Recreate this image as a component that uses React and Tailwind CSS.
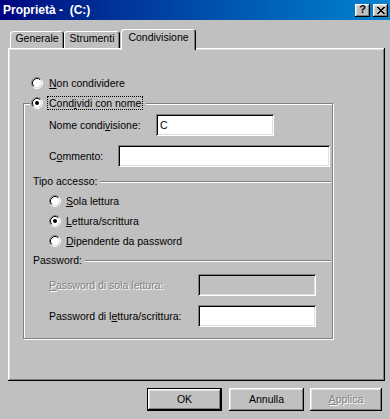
import React from "react";

const raised =
  "shadow-[inset_-1px_-1px_0_#000,inset_1px_1px_0_#fff,inset_-2px_-2px_0_#808080,inset_2px_2px_0_#dfdfdf]";
const sunken =
  "shadow-[inset_1px_1px_0_#808080,inset_-1px_-1px_0_#fff,inset_2px_2px_0_#000,inset_-2px_-2px_0_#dfdfdf]";

function Radio({ checked }) {
  return (
    <svg width="12" height="12" viewBox="0 0 12 12" className="shrink-0 block">
      <circle cx="6" cy="6" r="4.5" fill="#fff" />
      <path d="M2.11 9.89 A5.5 5.5 0 0 1 9.89 2.11" fill="none" stroke="#808080" strokeWidth="1" />
      <path d="M9.89 2.11 A5.5 5.5 0 0 1 2.11 9.89" fill="none" stroke="#fff" strokeWidth="1" />
      <path d="M2.82 9.18 A4.5 4.5 0 0 1 9.18 2.82" fill="none" stroke="#000" strokeWidth="1" />
      <path d="M9.18 2.82 A4.5 4.5 0 0 1 2.82 9.18" fill="none" stroke="#dfdfdf" strokeWidth="1" />
      {checked && <circle cx="6" cy="6" r="2" fill="#000" />}
    </svg>
  );
}

function Etched() {
  return <div className="flex-1 h-[2px] shadow-[inset_0_1px_0_#808080,inset_0_-1px_0_#fff]" />;
}

function Field({ w, value, disabled }) {
  return (
    <div
      className={`${w} h-[22px] ${disabled ? "bg-[#c0c0c0]" : "bg-white"} ${sunken} flex items-center pl-[4px] text-black`}
    >
      {value}
    </div>
  );
}

function Tab({ label, w, selected }) {
  if (selected) {
    return (
      <div
        className={`${w} h-[21px] -mb-[2px] relative z-10 bg-[#c0c0c0] rounded-t-[3px] shadow-[inset_1px_1px_0_#fff,inset_-1px_0_0_#000,inset_-2px_0_0_#808080] flex items-start justify-center pt-[3px]`}
      >
        {label}
      </div>
    );
  }
  return (
    <div
      className={`${w} h-[17px] bg-[#c0c0c0] rounded-t-[3px] shadow-[inset_1px_1px_0_#fff,inset_-1px_0_0_#000,inset_-2px_0_0_#808080] flex items-start justify-center pt-[2px]`}
    >
      {label}
    </div>
  );
}

export default function App() {
  return (
    <div className="w-[390px] h-[419px] bg-[#c0c0c0] overflow-hidden flex flex-col font-['Liberation_Sans',Arial,sans-serif] text-[10.5px] leading-none text-black select-none">
      {/* Title bar */}
      <div className="h-[20px] shrink-0 bg-linear-to-r from-[#000080] to-[#1084d0] flex items-center pl-[3px] pr-[2px]">
        <div className="text-white font-bold text-[12px] whitespace-pre">Proprietà -  (C:)</div>
        <div className="flex-1" />
        <div className={`w-[15px] h-[13px] ${raised} bg-[#c0c0c0] flex items-center justify-center text-[11px] font-bold pb-[1px]`}>?</div>
        <div className={`ml-[3px] w-[15px] h-[13px] ${raised} bg-[#c0c0c0] flex items-center justify-center`}>
          <svg width="8" height="7" viewBox="0 0 8 7" className="block">
            <path d="M0 0h2v1h1v1h2V1h1V0h2v1H7v1H6v1H5v1h1v1h1v1h1v1H6V6H5V5H3v1H2v1H0V6h1V5h1V4h1V3H2V2H1V1H0z" fill="#000" />
          </svg>
        </div>
      </div>

      {/* Tabs */}
      <div className="mt-[9px] ml-[10px] h-[19px] flex items-end">
        <Tab label="Generale" w="w-[54px]" />
        <Tab label="Strumenti" w="w-[56px]" />
        <div className="w-[1px]" />
        <Tab label="Condivisione" w="w-[75px]" selected />
      </div>

      {/* Panel */}
      <div className={`ml-[8px] w-[377px] h-[333px] shrink-0 ${raised} flex flex-col`}>
        <div className="mt-[27px] ml-[23px] h-[16px] flex items-center">
          <Radio />
          <span className="ml-[6px]">
            <u>N</u>on condividere
          </span>
        </div>

        {/* Group box */}
        <div className="mt-[12px] ml-[15px] w-[310px] h-[236px] border border-[#808080] shadow-[inset_1px_1px_0_#fff,1px_1px_0_#fff] flex flex-col">
          <div className="-mt-[8px] ml-[6px] h-[14px] flex">
            <div className="flex items-center bg-[#c0c0c0] pl-[1px] pr-[3px]">
              <Radio checked />
              <span className="ml-[4px] h-[14px] border border-dotted border-black px-[1px] flex items-center">
                Cond<u>i</u>vidi con nome
              </span>
            </div>
          </div>

          <div className="mt-[4px] h-[22px] flex items-center">
            <span className="ml-[25px] w-[107px]">
              Nome condi<u>v</u>isione:
            </span>
            <Field w="w-[118px]" value="C" />
          </div>

          <div className="mt-[9px] h-[22px] flex items-center">
            <span className="ml-[25px] w-[69px]">
              C<u>o</u>mmento:
            </span>
            <Field w="w-[212px]" />
          </div>

          <div className="mt-[8px] h-[13px] flex items-center pr-[1px]">
            <span className="ml-[9px] mr-[3px]">Tipo accesso:</span>
            <Etched />
          </div>

          <div className="mt-[3px] h-[20px] flex items-center">
            <div className="ml-[25px]">
              <Radio />
            </div>
            <span className="ml-[5px]">
              <u>S</u>ola lettura
            </span>
          </div>
          <div className="h-[20px] flex items-center">
            <div className="ml-[25px]">
              <Radio checked />
            </div>
            <span className="ml-[5px]">
              <u>L</u>ettura/scrittura
            </span>
          </div>
          <div className="h-[20px] flex items-center">
            <div className="ml-[25px]">
              <Radio />
            </div>
            <span className="ml-[5px]">
              <u>D</u>ipendente da password
            </span>
          </div>

          <div className="mt-[3px] h-[13px] flex items-center pr-[1px]">
            <span className="ml-[9px] mr-[3px]">Password:</span>
            <Etched />
          </div>

          <div className="mt-[7px] h-[22px] flex items-center">
            <span className="ml-[25px] w-[149px] text-[#808080] [text-shadow:1px_1px_0_#fff]">
              <u>P</u>assword di sola lettura:
            </span>
            <Field w="w-[118px]" disabled />
          </div>

          <div className="mt-[9px] h-[22px] flex items-center">
            <span className="ml-[25px] w-[149px]">
              Password di l<u>e</u>ttura/scrittura:
            </span>
            <Field w="w-[118px]" />
          </div>
        </div>
      </div>

      {/* Buttons */}
      <div className="mt-[7px] flex pl-[147px]">
        <div className="w-[75px] h-[23px] border border-black">
          <div className={`w-full h-full ${raised} flex items-center justify-center`}>OK</div>
        </div>
        <div className={`ml-[7px] w-[75px] h-[23px] ${raised} flex items-center justify-center`}>Annulla</div>
        <div className={`ml-[6px] w-[72px] h-[23px] ${raised} flex items-center justify-center text-[#808080] [text-shadow:1px_1px_0_#fff]`}>
          <span>
            <u>A</u>pplica
          </span>
        </div>
      </div>
    </div>
  );
}
